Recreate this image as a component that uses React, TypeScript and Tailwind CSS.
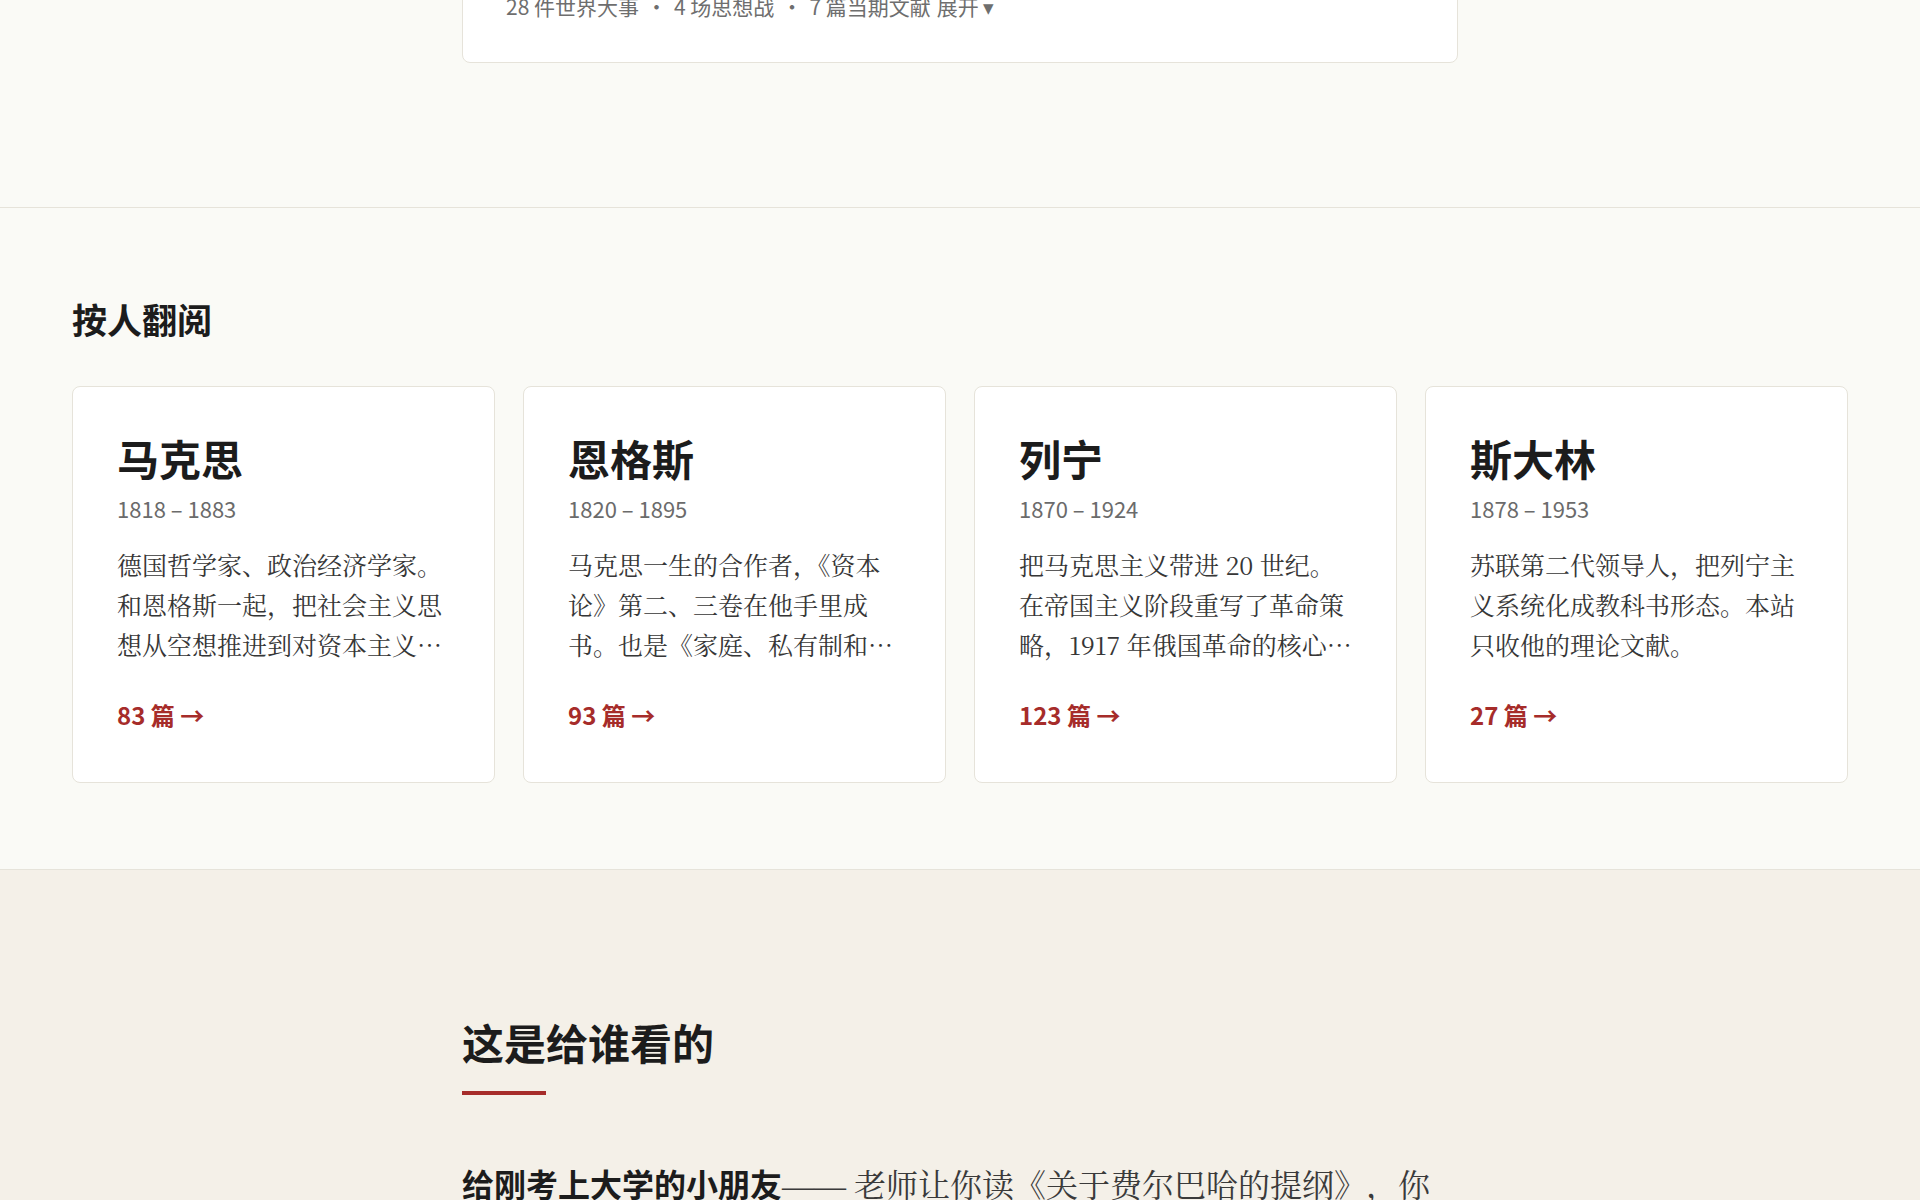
import React from "react";

const sans = "font-['Noto_Sans_CJK_SC','Noto_Sans',sans-serif]";
const serif = "font-['Noto_Serif_CJK_SC','Liberation_Serif','Noto_Sans_CJK_SC',serif]";
const bodySerif = "font-['Liberation_Serif','Noto_Serif_CJK_SC','Noto_Sans_CJK_SC',serif]";

type Person = {
  name: string;
  years: string;
  desc: string;
  count: number;
};

const people: Person[] = [
  {
    name: "马克思",
    years: "1818 – 1883",
    desc: "德国哲学家、政治经济学家。和恩格斯一起，把社会主义思想从空想推进到对资本主义生产方式的系统批判。",
    count: 83,
  },
  {
    name: "恩格斯",
    years: "1820 – 1895",
    desc: "马克思一生的合作者，《资本论》第二、三卷在他手里成书。也是《家庭、私有制和国家的起源》的作者。",
    count: 93,
  },
  {
    name: "列宁",
    years: "1870 – 1924",
    desc: "把马克思主义带进 20 世纪。在帝国主义阶段重写了革命策略，1917 年俄国革命的核心人物。",
    count: 123,
  },
  {
    name: "斯大林",
    years: "1878 – 1953",
    desc: "苏联第二代领导人，把列宁主义系统化成教科书形态。本站只收他的理论文献。",
    count: 27,
  },
];

function PersonCard({ p }: { p: Person }) {
  return (
    <a
      href="#"
      className="flex flex-col rounded-lg border border-[#e6e3da] bg-white px-[44px] pt-[45px] pb-[51px]"
    >
      <h3 className={`${sans} text-[42px] leading-[52px] font-bold text-[#1c1c1c]`}>{p.name}</h3>
      <div className={`${sans} mt-2 text-[22px] leading-[32px] text-[#6b6b6b]`}>{p.years}</div>
      <p className={`${serif} mt-[20px] line-clamp-3 text-[25px] leading-[40px] text-[#363636]`}>
        {p.desc}
      </p>
      <div className={`${sans} mt-[35px] text-[24px] leading-[32px] font-semibold text-[#a62c2a]`}>
        {p.count} 篇 →
      </div>
    </a>
  );
}

export default function App() {
  return (
    <div className="min-h-screen bg-[#fafaf6] text-[#1c1c1c]">
      {/* Section 1: overview card (scrolled partially out of view) */}
      <section className="-mt-[120px] border-b border-[#e6e3da] pb-36">
        <div className="mx-auto w-[996px] rounded-lg border border-[#e6e3da] bg-white px-[43px] pt-[44px] pb-[42px]">
          <h3 className={`${sans} text-[32px] leading-[48px] font-bold text-[#1c1c1c]`}>1845 年 · 本期</h3>
          <div className={`${sans} mt-[19px] flex items-center text-[21px] leading-[28px] text-[#6e6e6e]`}>
            <span>28 件世界大事</span>
            <span className="mx-[7px]">·</span>
            <span>4 场思想战</span>
            <span className="mx-[7px]">·</span>
            <span>7 篇当期文献</span>
            <button className="ml-[6px] text-[#6e6e6e]">展开 ▾</button>
          </div>
        </div>
      </section>

      {/* Section 2: browse by person */}
      <section className="border-b border-[#e6e3da] px-[72px] pt-[87px] pb-[86px]">
        <h2 className={`${sans} mb-[43px] text-[35px] leading-[48px] font-bold text-[#1c1c1c]`}>按人翻阅</h2>
        <div className="grid grid-cols-4 gap-7">
          {people.map((p) => (
            <PersonCard key={p.name} p={p} />
          ))}
        </div>
      </section>

      {/* Section 3: who is this for */}
      <section className="bg-[#f4f0e8] pt-[146px] pb-24">
        <div className="mx-auto w-[996px]">
          <h2 className={`${sans} text-[42px] leading-[52px] font-bold text-[#1c1c1c]`}>这是给谁看的</h2>
          <div className="mt-[23px] h-1 w-[84px] bg-[#a62c2a]" />
          <p className={`${bodySerif} mt-[60px] max-w-[985px] text-[32px] leading-[57.6px] text-[#3a3a3a] [text-spacing-trim:space-all]`}>
            <strong className={`${sans} font-bold text-[#1c1c1c]`}>给刚考上大学的小朋友</strong>—— 老师让你读《关于费尔巴哈的提纲》，你翻开一看全是"实践""感性的人的活动"，不知道它在跟谁吵架。这里按时间把它放回当年的争论里。
          </p>
        </div>
      </section>
    </div>
  );
}
